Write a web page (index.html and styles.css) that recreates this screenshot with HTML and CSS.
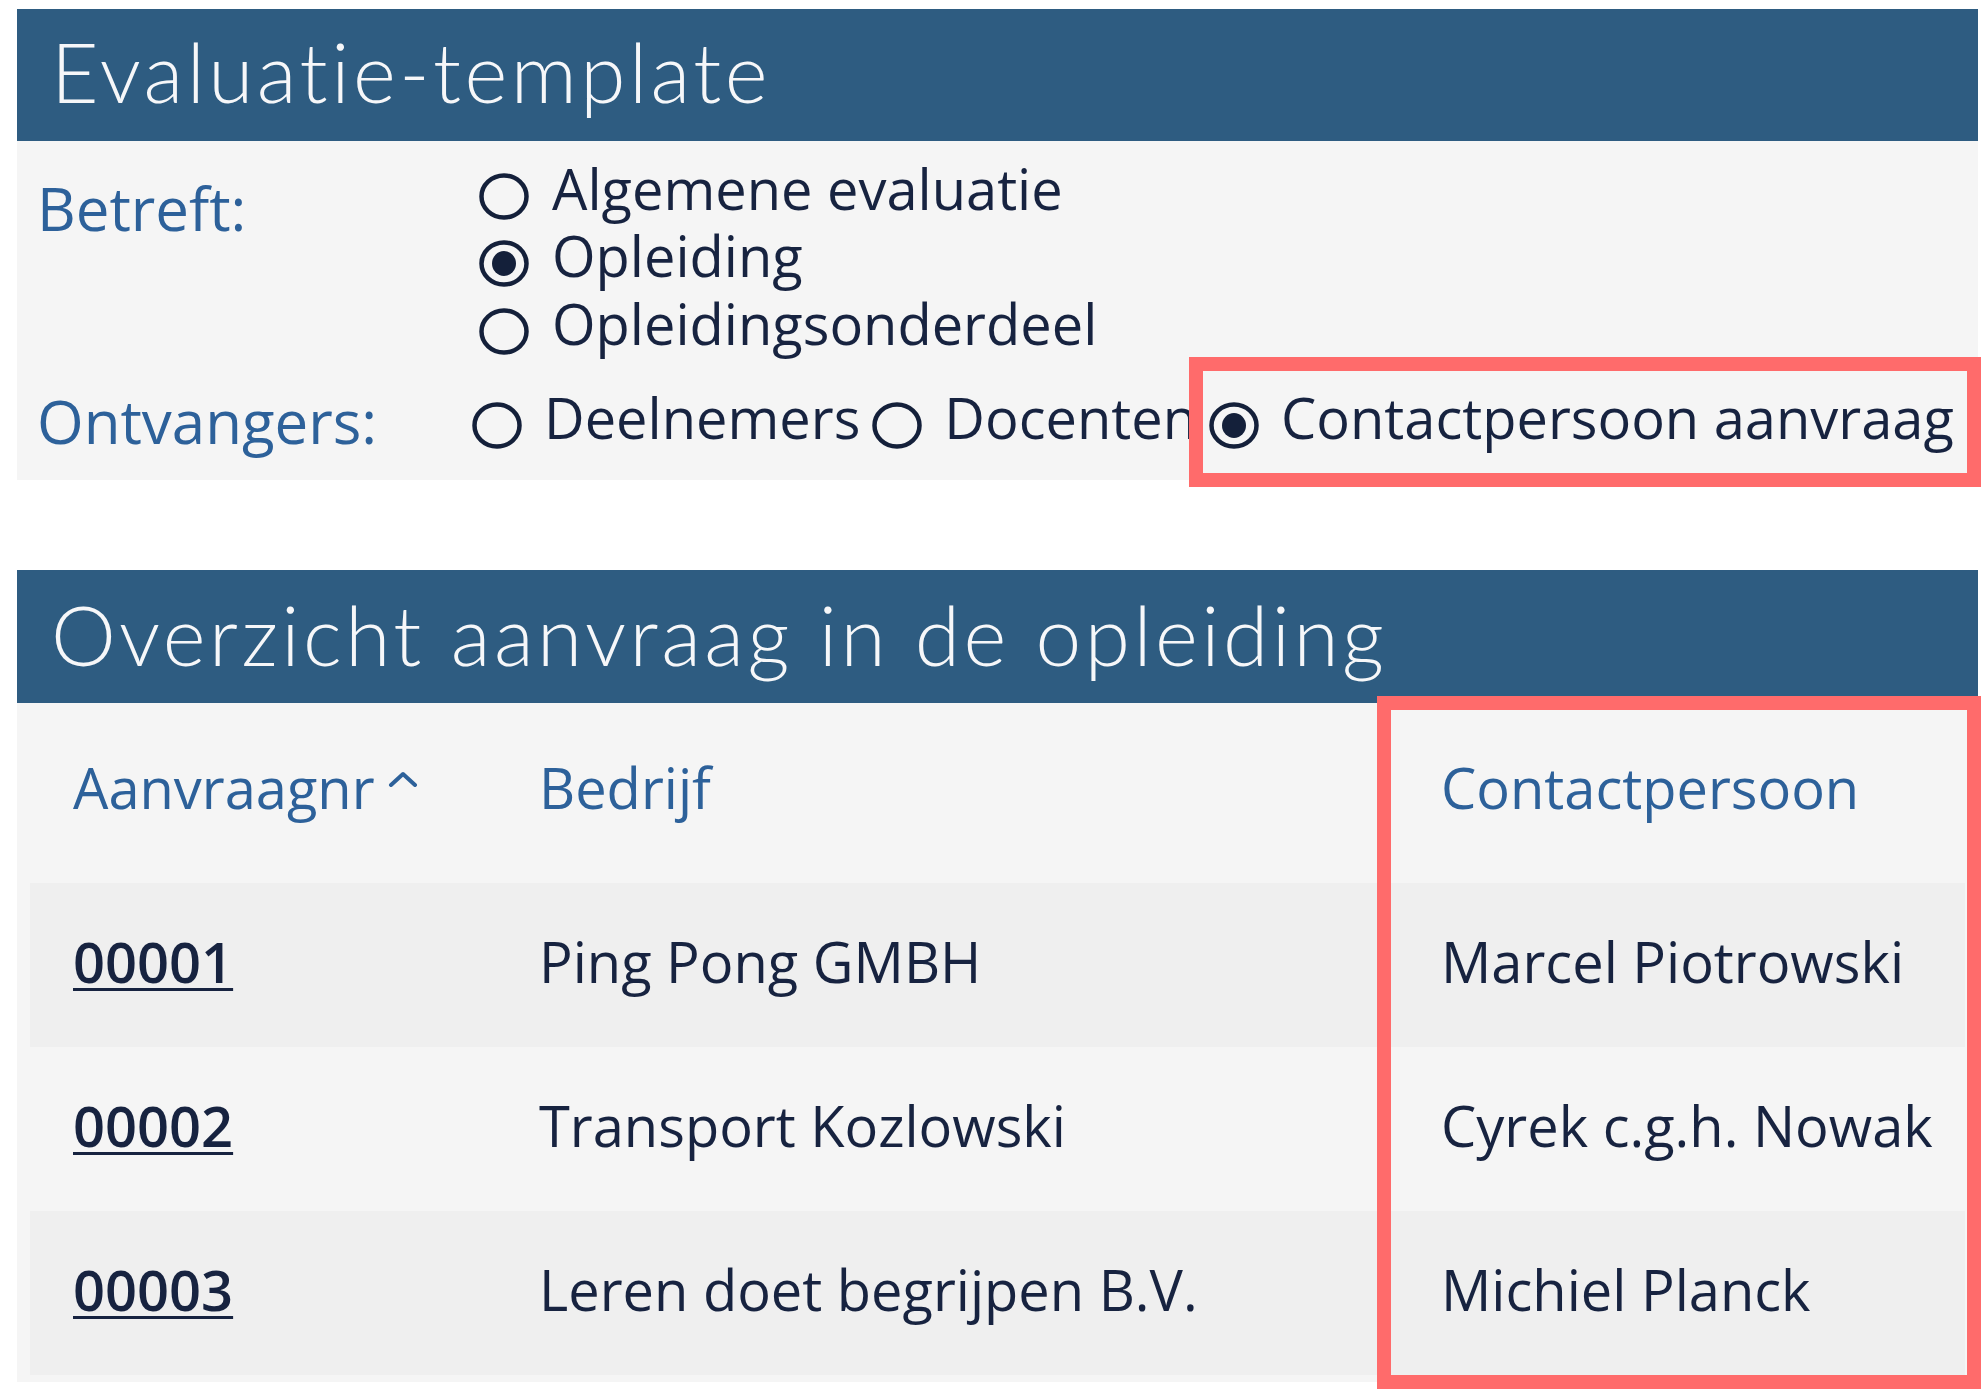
FILE: index.html
```html
<!DOCTYPE html>
<html lang="nl">
<head>
<meta charset="utf-8">
<title>Evaluatie-template</title>
<link rel="stylesheet" href="styles.css">
</head>
<body>
<div class="page">
  <section class="card card-form">
    <h1 class="card-title">Evaluatie-template</h1>
    <div class="form-body">
      <div class="form-label label-betreft">Betreft:</div>
      <div class="option-list">
        <div class="option">
          <svg class="radio" viewBox="0 0 50 47" width="50" height="47"><ellipse cx="25" cy="23.5" rx="22.5" ry="21" fill="none" stroke="#14203a" stroke-width="4.5"/></svg><span class="opt-text">Algemene evaluatie</span>
        </div>
        <div class="option">
          <svg class="radio" viewBox="0 0 50 47" width="50" height="47"><ellipse cx="25" cy="23.5" rx="22.5" ry="21" fill="none" stroke="#14203a" stroke-width="4.5"/><ellipse cx="25" cy="23.5" rx="12" ry="12.5" fill="#14203a"/></svg><span class="opt-text">Opleiding</span>
        </div>
        <div class="option">
          <svg class="radio" viewBox="0 0 50 47" width="50" height="47"><ellipse cx="25" cy="23.5" rx="22.5" ry="21" fill="none" stroke="#14203a" stroke-width="4.5"/></svg><span class="opt-text">Opleidingsonderdeel</span>
        </div>
      </div>
      <div class="form-label label-ontvangers">Ontvangers:</div>
      <div class="option-row">
        <span class="option-inline"><svg class="radio" viewBox="0 0 50 47" width="50" height="47"><ellipse cx="25" cy="23.5" rx="22.5" ry="21" fill="none" stroke="#14203a" stroke-width="4.5"/></svg><span class="opt-text">Deelnemers</span></span><span class="option-inline"><svg class="radio" viewBox="0 0 50 47" width="50" height="47"><ellipse cx="25" cy="23.5" rx="22.5" ry="21" fill="none" stroke="#14203a" stroke-width="4.5"/></svg><span class="opt-text">Docenten</span></span><span class="option-inline"><svg class="radio" viewBox="0 0 50 47" width="50" height="47"><ellipse cx="25" cy="23.5" rx="22.5" ry="21" fill="none" stroke="#14203a" stroke-width="4.5"/><ellipse cx="25" cy="23.5" rx="12" ry="12.5" fill="#14203a"/></svg><span class="opt-text">Contactpersoon aanvraag</span></span>
      </div>
    </div>
  </section>

  <section class="card card-table">
    <h1 class="card-title title-2">Overzicht aanvraag in de opleiding</h1>
    <div class="table-body">
      <div class="trow thead">
        <div class="cell">Aanvraagnr<svg class="caret" viewBox="0 0 30 16" width="30" height="16"><polyline points="3,14 15,3 27,14" fill="none" stroke="#2d619a" stroke-width="4" stroke-linecap="round" stroke-linejoin="round"/></svg></div>
        <div class="cell">Bedrijf</div>
        <div class="cell">Contactpersoon</div>
      </div>
      <div class="trow tdata odd">
        <div class="cell"><a class="num" href="#">00001</a></div>
        <div class="cell">Ping Pong GMBH</div>
        <div class="cell">Marcel Piotrowski</div>
      </div>
      <div class="trow tdata even">
        <div class="cell"><a class="num" href="#">00002</a></div>
        <div class="cell">Transport Kozlowski</div>
        <div class="cell">Cyrek c.g.h. Nowak</div>
      </div>
      <div class="trow tdata odd">
        <div class="cell"><a class="num" href="#">00003</a></div>
        <div class="cell">Leren doet begrijpen B.V.</div>
        <div class="cell">Michiel Planck</div>
      </div>
    </div>
  </section>

  <div class="highlight highlight-1"></div>
  <div class="highlight highlight-2"></div>
</div>
</body>
</html>
```

FILE: styles.css
```css
html, body {
  margin: 0;
  padding: 0;
  background: #ffffff;
  overflow: hidden;
}

.page {
  position: relative;
  width: 1981px;
  height: 1389px;
  padding: 9px 3px 0 17px;
  box-sizing: border-box;
  font-family: "Open Sans", "Liberation Sans", sans-serif;
  color: #172340;
}

.card {
  width: 1961px;
  background: #f5f5f5;
}

.card-table {
  margin-top: 90px;
}

.card-title {
  margin: 0;
  height: 132px;
  box-sizing: border-box;
  padding: 13px 0 0 34px;
  background: #2e5c81;
  color: #f6f7f9;
  font-family: "Lato", "Open Sans", sans-serif;
  font-weight: 300;
  font-size: 82px;
  line-height: 1.2;
  letter-spacing: 3.5px;
  white-space: nowrap;
}

.title-2 {
  height: 133px;
  padding-top: 15px;
}

/* ---------- form ---------- */
.form-body {
  display: grid;
  grid-template-columns: 435px 1fr;
  row-gap: 26.5px;
  padding: 13.5px 0 29px 20px;
}

.form-label {
  font-size: 60px;
  line-height: 67.5px;
  color: #2d619a;
}

.label-betreft {
  padding-top: 20.5px;
}

.label-ontvangers {
  padding-top: 4.5px;
  margin-bottom: -4.5px;
}

.option-list {
  margin-left: 7px;
}

.option, .option-row {
  font-size: 56px;
  line-height: 67.5px;
  white-space: nowrap;
}

.radio {
  display: inline-block;
  vertical-align: -10px;
  margin-right: 23px;
}

.option-row .radio {
  margin-right: 22px;
}

.option-inline + .option-inline {
  margin-left: 12px;
}

/* ---------- table ---------- */
.table-body {
  padding: 0 13px 7px 13px;
}

.trow {
  display: grid;
  grid-template-columns: 466px 902px 1fr;
  font-size: 56px;
  line-height: 76px;
  white-space: nowrap;
  box-sizing: border-box;
}

.cell {
  padding-left: 43px;
}

.thead {
  height: 180px;
  padding-top: 46px;
  color: #2d619a;
}

.tdata {
  height: 164px;
  padding-top: 40px;
}

.odd {
  background: #efefef;
}

.even {
  background: #f5f5f5;
}

.caret {
  display: inline-block;
  margin-left: 13px;
  vertical-align: 22px;
}

.num {
  color: #172340;
  font-weight: 600;
  text-decoration: underline;
  text-decoration-thickness: 3px;
  text-underline-offset: 5px;
}

/* ---------- annotation boxes ---------- */
.highlight {
  position: absolute;
  border: 14px solid #ff6b6b;
  box-sizing: border-box;
}

.highlight-1 {
  left: 1189px;
  top: 357px;
  width: 792px;
  height: 130px;
}

.highlight-2 {
  left: 1377px;
  top: 696px;
  width: 604px;
  height: 693px;
}
```
